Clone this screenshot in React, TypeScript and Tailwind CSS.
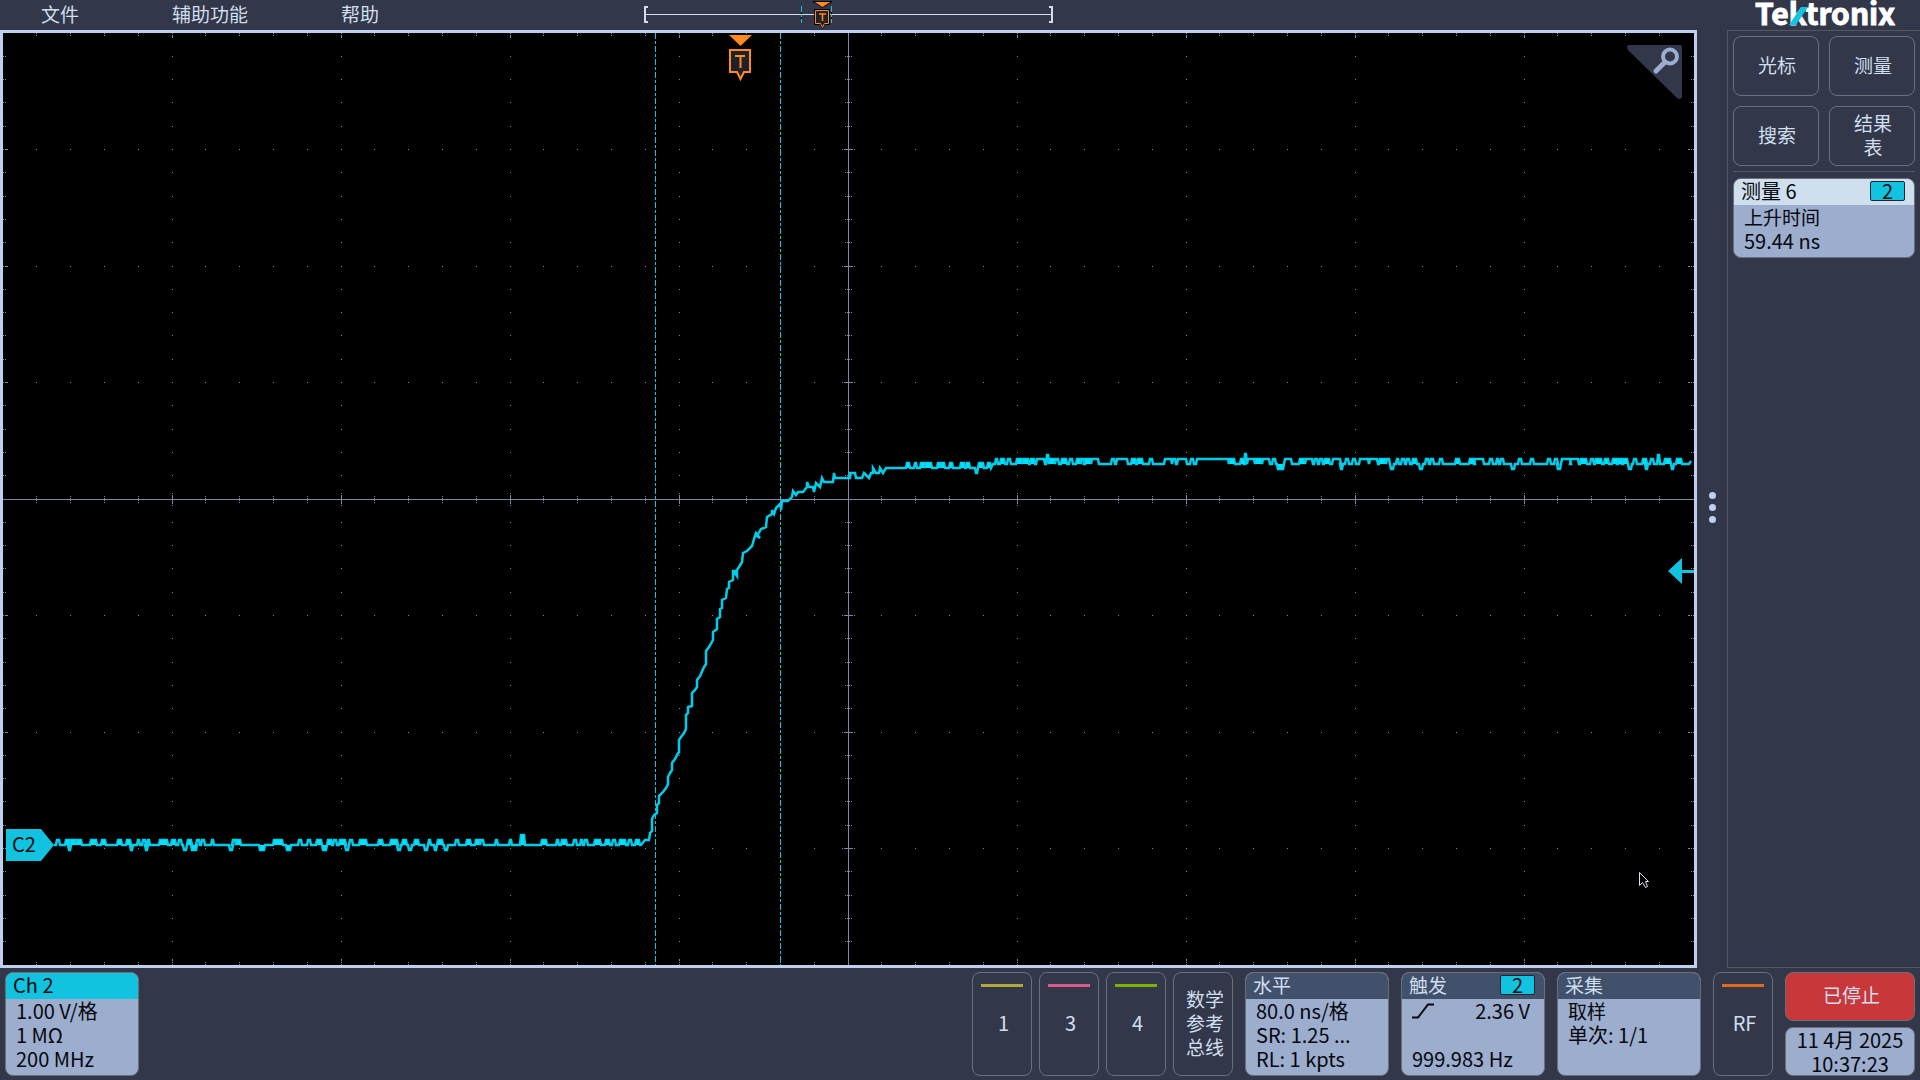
import type { ReactNode } from 'react';

const GRID = '#8088a8';
const CYAN = '#11c3df';

// vertical and horizontal graticule steps
const minorX = Array.from({ length: 49 }, (_, i) => Math.floor(848.01 + (i - 24) * 33.8));
const minorY = Array.from({ length: 39 }, (_, i) => Math.floor(499.01 + (i - 19) * 23.3));

type Bump = [x: number, width: number, dy: number];

// noise on the low level, x / width / offset
const lowBumps: Bump[] = [
    [57, 2, -5], [66, 3, -5], [69, 1, 5], [71, 4, -5], [77, 4, -5], [91, 5, -5], [102, 3, -5], [118, 3, -5],
    [127, 3, -5], [131, 1, 5], [138, 1, -5], [143, 2, -5], [146, 1, 5], [148, 1, -5], [160, 7, -5], [172, 3, -5],
    [179, 2, -5], [184, 2, 5], [188, 3, -5], [192, 4, 5], [197, 2, -5], [202, 2, -5], [212, 1, -5], [230, 2, 5],
    [233, 2, -5], [237, 3, -5], [260, 4, 5], [274, 8, -5], [287, 3, 5], [299, 2, -5], [308, 2, -5], [317, 4, -5],
    [323, 3, 5], [328, 3, -5], [334, 2, -5], [340, 5, -5], [346, 2, 5], [350, 2, -5], [360, 6, -5], [379, 3, -5],
    [391, 6, -5], [398, 2, 5], [403, 3, -5], [409, 2, 5], [415, 3, -5], [425, 2, 5], [429, 1, -5], [435, 1, 5],
    [438, 4, -5], [445, 2, 5], [456, 2, -5], [467, 3, -5], [476, 3, -5], [481, 2, -5], [496, 1, -5], [510, 1, -5],
    [521, 3, -10], [542, 4, -5], [557, 1, -5], [562, 4, -5], [574, 2, -5], [581, 1, -5], [585, 2, -5], [595, 5, -5],
    [606, 3, -5], [613, 2, -5], [620, 5, -5], [629, 2, -5], [636, 3, -5],
];

const rise = [
    [641, 845], [645, 840], [649, 840], [650, 833], [652, 831], [652, 819], [654, 815], [657, 813], [657, 805],
    [659, 803], [659, 796], [663, 792], [666, 788], [668, 784], [668, 777], [670, 773], [672, 770], [672, 763],
    [675, 759], [677, 755], [679, 752], [679, 740], [681, 737], [684, 733], [686, 729], [686, 715], [688, 713],
    [688, 707], [692, 706], [692, 693], [695, 690], [697, 687], [697, 680], [700, 676], [704, 667], [706, 664],
    [706, 651], [709, 647], [713, 640], [713, 632], [717, 629], [717, 619], [720, 617], [720, 609], [722, 608],
    [722, 600], [726, 598], [727, 589], [729, 588], [729, 582], [733, 580], [733, 571], [737, 571], [737, 576],
    [735, 573], [739, 567], [742, 562], [743, 553], [747, 551], [752, 546], [754, 539], [756, 533], [760, 538],
    [757, 536], [761, 529], [766, 527], [767, 517], [772, 514], [772, 510], [774, 514], [776, 508], [781, 503],
    [781, 510], [782, 501], [788, 501], [792, 497], [793, 491], [796, 495], [798, 492], [803, 492], [807, 487],
    [807, 482], [809, 487], [813, 487], [814, 492], [816, 483], [820, 487], [822, 478], [824, 482], [829, 482],
    [833, 482], [834, 473], [835, 478], [850, 478], [850, 473], [855, 473], [856, 478], [862, 478], [864, 473],
    [869, 478], [871, 473], [873, 473], [873, 468], [876, 473], [879, 473], [880, 468], [883, 473], [886, 468],
];

const shoulderBumps: Bump[] = [
    [907, 2, -5], [915, 1, -5], [921, 3, -5], [926, 5, -5], [938, 2, -5], [942, 2, -5], [950, 2, -5], [961, 3, -5],
    [967, 2, -5], [976, 1, 5], [979, 4, -5], [988, 2, -5],
];

const highBumps: Bump[] = [
    [996, 1, -5], [1001, 3, -5], [1008, 2, -5], [1017, 4, -5], [1023, 5, -5], [1031, 3, -5], [1037, 7, -5],
    [1047, 1, -9], [1050, 4, -5], [1056, 2, -5], [1062, 4, -5], [1070, 2, -5], [1077, 3, -5], [1082, 2, -5],
    [1085, 5, -5], [1092, 6, -5], [1112, 2, -5], [1117, 10, -5], [1132, 3, -5], [1138, 4, -5], [1150, 2, -5],
    [1165, 6, -5], [1173, 2, -5], [1178, 8, -5], [1191, 2, -5], [1197, 31, -5], [1230, 4, -5], [1241, 3, -5],
    [1245, 1, -10], [1248, 6, -5], [1256, 5, -5], [1263, 6, -5], [1273, 2, -5], [1278, 5, 5], [1285, 6, -5],
    [1300, 4, -5], [1306, 6, -5], [1315, 2, -5], [1320, 2, -5], [1325, 4, -5], [1333, 7, -5], [1341, 1, 5],
    [1346, 2, -5], [1353, 2, -5], [1360, 8, -5], [1370, 7, -5], [1380, 5, -5], [1387, 2, -5], [1391, 2, 5],
    [1397, 1, -5], [1402, 2, -5], [1407, 2, -5], [1413, 3, -5], [1420, 2, 5], [1426, 2, -5], [1431, 2, -5],
    [1440, 2, -5], [1456, 3, -5], [1470, 4, -5], [1475, 8, -5], [1490, 2, -5], [1497, 1, -5], [1501, 2, -5],
    [1512, 2, 5], [1519, 2, -5], [1531, 2, -5], [1548, 2, -5], [1555, 2, -5], [1558, 2, 5], [1562, 8, -5],
    [1571, 7, -5], [1581, 5, -5], [1591, 2, -5], [1596, 5, -5], [1605, 3, -5], [1613, 4, -5], [1618, 4, -5],
    [1623, 4, -5], [1629, 2, 5], [1634, 2, -5], [1643, 3, -5], [1646, 1, 5], [1651, 2, -5], [1658, 1, -9],
    [1665, 5, -5], [1672, 1, 5], [1677, 4, -5],
];

const walk = (y: number, bumps: Bump[]) =>
    bumps.map(([x, w, dy]) => `L${x - 1} ${y}L${x} ${y + dy}L${x + w} ${y + dy}L${x + w + 1} ${y}`).join('');

const trace = [
    'M54 845',
    walk(845, lowBumps),
    rise.map(([x, y]) => `L${x} ${y}`).join(''),
    walk(468, shoulderBumps),
    'L993 464',
    walk(464, highBumps),
    'L1689 464L1691 461',
].join('');

// short bumps on the trace read as solid blocks
const blocks = [
    ...lowBumps.filter((b) => b[1] > 2 && b[1] < 9).map(([x, w, dy]) => [x, w, dy, 845]),
    ...shoulderBumps.filter((b) => b[1] > 1).map(([x, w, dy]) => [x, w, dy, 468]),
    ...highBumps.filter((b) => b[1] > 2 && b[1] < 6).map(([x, w, dy]) => [x, w, dy, 464]),
];

function Graticule() {
    const dots: ReactNode[] = [];
    const dot = (x: number, y: number, w = 1, h = 1) =>
        dots.push(<rect key={`${x}-${y}-${w}-${h}-${dots.length}`} x={x} y={y} width={w} height={h} />);

    minorX.forEach((x, i) => {
        const major = (i - 24) % 5 === 0;
        minorY.forEach((y, j) => {
            const majorRow = (j - 19) % 5 === 0;
            if (major || majorRow) dot(x, y);
        });
        // edge ticks
        dot(x, 33);
        dot(x, 35);
        dot(x, 962);
        dot(x, 964);
        if (major) {
            dot(x, 36, 1, 2);
            dot(x, 959, 1, 2);
            dot(x, 495, 1, 9);
            dot(x, 493);
            dot(x, 505);
        } else {
            [496, 498, 500, 502].forEach((y) => dot(x, y));
        }
    });
    minorY.forEach((y, j) => {
        const major = (j - 19) % 5 === 0;
        dot(3, y);
        dot(5, y);
        dot(1691, y);
        dot(1693, y);
        if (major) {
            dot(6, y, 2, 1);
            dot(1688, y, 2, 1);
            dot(844, y, 9, 1);
            dot(842, y);
            dot(854, y);
        } else {
            [845, 847, 849, 851].forEach((x) => dot(x, y));
        }
    });

    return (
        <g fill={GRID} shapeRendering="crispEdges">
            <rect x="3" y="499" width="1691" height="1" />
            <rect x="848" y="33" width="1" height="932" />
            {dots}
        </g>
    );
}

function Plot() {
    return (
        <div className="relative min-h-0 flex-1 border-[3px] border-[#bed0f0] bg-black">
            <svg className="block h-full w-full" viewBox="3 33 1691 932" preserveAspectRatio="none">
                <Graticule />
                <g stroke={CYAN} strokeDasharray="6 2 3 2" shapeRendering="crispEdges">
                    <path d="M655.5 33V965" />
                    <path d="M780.5 33V965" />
                </g>
                <path d={trace} fill="none" stroke="#00cdea" strokeWidth="2.5" />
                <g fill="#00e0fa">
                    {blocks.map(([x, w, dy, y]) => (
                        <rect key={`${x}-${dy}`} x={x} y={Math.min(y, y + dy)} width={w} height={Math.abs(dy)} />
                    ))}
                </g>

                {/* trigger position */}
                <path d="M729 35H752L740.500 46Z" fill="#ff8a1e" />
                <path d="M730 50H750V72H744L740.500 79L737 72H730Z" fill="#20202a" stroke="#ff8a1e" strokeWidth="2" />
                <path d="M735 56H745M740.500 56V68" stroke="#ff8a1e" strokeWidth="2" />

                {/* trigger level */}
                <path d="M1668 571L1682 558V570H1694V573H1682V584Z" fill={CYAN} />

                {/* channel handle */}
                <path d="M6 829H41L54 845L41 861H6Z" fill={CYAN} />
                <text x="12" y="852" fontSize="20" fill="#05080c">C2</text>

                {/* mouse pointer */}
                <path
                    d="M1639.500 872.500V885.500L1642.500 882.500L1645.500 887.500L1647.500 886.500L1645.500 881.500H1648.500Z"
                    fill="#000"
                    stroke="#d5e4f2"
                />
            </svg>
            <button type="button" aria-label="缩放" className="absolute right-3 top-3">
                <svg className="block" width="55" height="54" viewBox="0 0 55 54">
                    <path d="M2 0H53Q55 0 55 2V51Q55 54 52 54L50 53L1 5Q-1 0 2 0Z" fill="#32374a" />
                    <circle cx="43" cy="11.500" r="7" fill="none" stroke="#9cadce" strokeWidth="4" />
                    <path d="M38 17L29 26" stroke="#9cadce" strokeWidth="5" strokeLinecap="round" />
                </svg>
            </button>
        </div>
    );
}

function RecordView() {
    return (
        <svg width="410" height="30" viewBox="644 0 410 30">
            <path d="M645 14.500H1053" stroke="#d0dfee" />
            <path d="M648 7H645V22H648M1049 7H1052V22H1049" fill="none" stroke="#d0dfee" strokeWidth="2" />
            <path d="M801.500 6V23M831.500 6V23" stroke="#000" />
            <path d="M801.500 6V23M831.500 6V23" stroke={CYAN} strokeDasharray="6 2 3 2" />
            <path d="M813 1.500H832L822.500 7.500Z" fill="#ff8a1e" stroke="#000" />
            <path d="M814 9H830V25H825L822.500 29L820 25H814Z" fill="#000" />
            <path d="M815.500 10.500H828.500V23.500H824.500L822.500 27.500L820.500 23.500H815.500Z" fill="#20202a" stroke="#ff8a1e" />
            <path d="M819 14H826M822.500 14V21" stroke="#ff8a1e" strokeWidth="1.500" />
        </svg>
    );
}

function Logo() {
    return (
        <svg className="ml-7 block" width="142" height="30" viewBox="0 0 142 30" role="img" aria-label="Tektronix">
            <text x="0" y="25" fontSize="30" fontWeight="700" fill="#fff" stroke="#fff" strokeWidth="1">Tektronix</text>
            <path d="M34 25L46 7H53L41 25Z" fill={CYAN} />
        </svg>
    );
}

function SideButton({ children }: { children: ReactNode }) {
    return (
        <button
            type="button"
            className="flex h-[60px] items-center justify-center rounded-lg border border-[#6b7078] pb-[2px] pl-[22px] pr-5 text-center text-[19px] leading-6 text-[#d0dfee]"
        >
            {children}
        </button>
    );
}

function ChannelBadge() {
    return (
        <span className="flex h-5 w-[35px] items-center justify-center rounded-xs border border-[#1c2430] bg-[#11c3df] text-[20px] text-[#05080c]">
            2
        </span>
    );
}

interface CardProps {
    title: string;
    head: string;
    className?: string;
    badge?: boolean;
    children: ReactNode;
}

function Card({ title, head, className = '', badge, children }: CardProps) {
    return (
        <section className={`flex flex-col overflow-hidden rounded-lg border border-[#6b7078] bg-[#9cadce] leading-6 text-[#05080c] ${className}`}>
            <h2 className={`flex h-[26px] shrink-0 items-center justify-between pb-[2px] pl-[7px] pr-[9px] ${head}`}>
                {title}
                {badge && <ChannelBadge />}
            </h2>
            <div className="flex-1 pl-[10px] pr-[14px]">{children}</div>
        </section>
    );
}

function ChannelButton({ label, bar }: { label: string; bar: string }) {
    return (
        <button
            type="button"
            className="flex h-[104px] w-[60px] flex-col items-center rounded-lg border border-[#6b7078] pt-[11px] text-[#d0dfee]"
        >
            <span className={`h-[3px] w-[42px] ${bar}`}></span>
            <span className="mt-6 pl-[3px] leading-6">{label}</span>
        </button>
    );
}

export default function App() {
    return (
        <div className="flex h-screen flex-col overflow-hidden bg-[#32374a] font-['Noto_Sans_CJK_SC',sans-serif] text-[20px]">
            <div className="flex min-h-0 flex-1">
                <main className="flex min-w-0 flex-1 flex-col">
                    <nav className="flex h-[30px] items-start pl-[41px] text-left text-[19px] leading-7 text-[#d0dfee]">
                        <button type="button" className="w-[131px] text-left">文件</button>
                        <button type="button" className="w-[169px] text-left">辅助功能</button>
                        <button type="button" className="w-[303px] text-left">帮助</button>
                        <RecordView />
                    </nav>
                    <Plot />
                </main>

                <button type="button" aria-label="菜单" className="flex w-[30px] flex-col items-center justify-center gap-[5px] pt-[46px]">
                    <span className="size-[7px] rounded-full bg-[#bed0f0]"></span>
                    <span className="size-[7px] rounded-full bg-[#bed0f0]"></span>
                    <span className="size-[7px] rounded-full bg-[#bed0f0]"></span>
                </button>

                <aside className="flex w-[193px] flex-col">
                    <Logo />
                    <div className="flex-1 border-b border-l border-t border-[#55575f] px-[5px] pt-[5px]">
                        <div className="grid grid-cols-2 gap-[10px]">
                            <SideButton>光标</SideButton>
                            <SideButton>测量</SideButton>
                            <SideButton>搜索</SideButton>
                            <SideButton>结果表</SideButton>
                        </div>
                        <div className="mb-[6px] mt-[5px] border-t border-[#55575f]"></div>
                        <Card title="测量 6" head="bg-[#d0dfee]" className="h-20" badge>
                            <p className="text-[19px]">上升时间</p>
                            <p>59.44 ns</p>
                        </Card>
                    </div>
                </aside>
            </div>

            <footer className="flex justify-between px-[5px] py-1">
                <Card title="Ch 2" head="bg-[#11c3df]" className="h-[104px] w-[134px]">
                    <p>1.00 V/格</p>
                    <p>1 MΩ</p>
                    <p>200 MHz</p>
                </Card>

                <div className="flex gap-3">
                    <div className="flex gap-[7px]">
                        <ChannelButton label="1" bar="bg-[#b0a83a]" />
                        <ChannelButton label="3" bar="bg-[#dc5a8c]" />
                        <ChannelButton label="4" bar="bg-[#7fb000]" />
                        <button
                            type="button"
                            className="h-[104px] w-[60px] rounded-lg border border-[#6b7078] pb-[2px] pl-3 pr-2 text-[19px] leading-6 text-[#d0dfee]"
                        >
                            数学参考总线
                        </button>
                    </div>
                    <Card title="水平" head="bg-[#41506b] text-[19px] text-[#d0dfee]" className="w-36">
                        <p>80.0 ns/格</p>
                        <p>SR: 1.25 ...</p>
                        <p>RL: 1 kpts</p>
                    </Card>
                    <Card title="触发" head="bg-[#41506b] text-[19px] text-[#d0dfee]" className="w-36" badge>
                        <p className="flex items-center justify-between">
                            <svg width="22" height="16" viewBox="0 0 22 16">
                                <path d="M0 14.500H6L16 1.500H22" fill="none" stroke="#05080c" strokeWidth="2" />
                            </svg>
                            2.36 V
                        </p>
                        <p className="mt-6">999.983 Hz</p>
                    </Card>
                    <Card title="采集" head="bg-[#41506b] text-[19px] text-[#d0dfee]" className="w-36">
                        <p className="text-[19px]">取样</p>
                        <p>单次: 1/1</p>
                    </Card>
                    <ChannelButton label="RF" bar="bg-[#e06a20]" />
                    <div className="flex w-[130px] flex-col gap-[6px]">
                        <button type="button" className="h-[49px] rounded-lg border border-[#6b7078] bg-[#c8383b] pb-[2px] pl-[3px] text-[19px] text-[#d0dfee]">
                            已停止
                        </button>
                        <div className="h-[49px] rounded-lg border border-[#6b7078] bg-[#9cadce] text-center leading-6 text-[#05080c]">
                            <p>11 4月 2025</p>
                            <p>10:37:23</p>
                        </div>
                    </div>
                </div>
            </footer>
        </div>
    );
}
